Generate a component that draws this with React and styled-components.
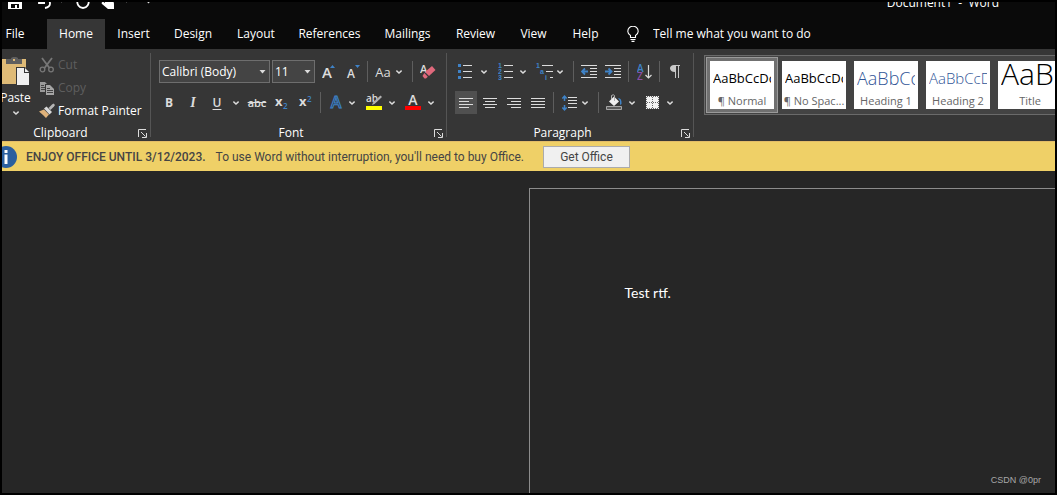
import React from "react";
import styled, { createGlobalStyle } from "styled-components";

const GlobalStyle = createGlobalStyle`
  * { box-sizing: border-box; }
  body {
    margin: 0;
    background: #000;
    color: #fff;
    font: 12px/16px "Open Sans", "Noto Sans", sans-serif;
  }
  button, select, input { font: inherit; color: inherit; }
  svg { display: block; flex: none; }
`;

/* ################################ LAYOUT ################################*/
const Window = styled.div`
  position: relative;
  display: flex;
  flex-direction: column;
  min-height: 100vh;
  border: 2px solid #000;
  overflow: hidden;
`;

const TitleBar = styled.header`
  display: flex;
  align-items: flex-end;
  justify-content: space-between;
  height: 17px;
  padding: 0 56px 8px 6px;
  background: #0a0a0a;
  overflow: hidden;
`;

const QuickAccess = styled.div`
  display: flex;
  align-items: flex-end;
  padding-bottom: 2px;
`;

const QuickButton = styled.button`
  display: flex;
  justify-content: center;
  align-items: flex-end;
  width: ${(p) => p.$w}px;
  margin-left: ${(p) => p.$gap || 0}px;
  padding: 0 0 ${(p) => p.$lift || 0}px;
  border: 0;
  background: none;
`;

const DocName = styled.div`
  white-space: pre;
`;

const TabBar = styled.nav`
  display: flex;
  height: 30px;
  background: #0a0a0a;
`;

const Tab = styled.button`
  width: ${(p) => p.$w}px;
  padding: 0 ${(p) => (p.$first ? 19 : 0)}px 0 0;
  border: 0;
  background: ${(p) => (p.$active ? "#363636" : "transparent")};
  text-align: center;
`;

const TellMe = styled.label`
  display: flex;
  flex: 1;
  align-items: center;
  gap: 14px;
  padding-left: 16px;
  input {
    flex: 1;
    padding: 0;
    border: 0;
    background: none;
    outline: none;
  }
  input::placeholder {
    color: #fff;
    opacity: 1;
  }
`;

const Ribbon = styled.div`
  display: flex;
  height: 92px;
  padding-top: 4px;
  background: #363636;
`;

const Group = styled.section`
  display: flex;
  flex: none;
  flex-direction: column;
  justify-content: space-between;
  width: ${(p) => p.$w}px;
  margin-left: ${(p) => (p.$cut ? -16 : 0)}px;
  background: linear-gradient(#555, #555) right top / 1px 84px no-repeat;
`;

const GroupFooter = styled.div`
  display: flex;
  align-items: center;
  height: 16px;
  padding-right: 1px;
  span {
    flex: 1;
    text-align: center;
  }
`;

const Launcher = styled.button`
  width: 15px;
  padding: 3px;
  border: 0;
  background: none;
`;

const ClipboardBody = styled.div`
  display: flex;
`;

const PasteButton = styled.button`
  display: flex;
  flex-direction: column;
  align-items: center;
  width: 51px;
  padding: 4px 0 0 8px;
  border: 0;
  background: none;
  span { margin: 4px 0 5px; }
`;

const ClipList = styled.div`
  display: flex;
  flex-direction: column;
`;

const ClipButton = styled.button`
  display: flex;
  align-items: center;
  gap: 3px;
  height: 23px;
  padding: 0 0 0 2px;
  border: 0;
  background: none;
  color: ${(p) => (p.disabled ? "#5e5e5e" : "#fff")};
  white-space: nowrap;
`;

const Rows = styled.div`
  display: flex;
  flex-direction: column;
  gap: 8px;
  padding: 7px 0 0 6px;
`;

const Row = styled.div`
  display: flex;
  align-items: center;
  height: 23px;
`;

const Tool = styled.button`
  display: flex;
  flex: none;
  align-items: center;
  justify-content: center;
  width: ${(p) => (p.$on ? 22 : 24)}px;
  height: 23px;
  margin-left: ${(p) => p.$gap || 0}px;
  padding: 0;
  border: 0;
  background: ${(p) => (p.$on ? "#505050" : "none")};
  color: #dcdcdc;
`;

const Drop = styled(Tool)`
  width: ${(p) => p.$w || 12}px;
`;

const Sep = styled.i`
  flex: none;
  width: 1px;
  height: 21px;
  margin: 0 3px 0 ${(p) => p.$gap || 3}px;
  background: #5e5e5e;
`;

const Combo = styled.div`
  position: relative;
  width: ${(p) => p.$w}px;
  height: 23px;
  margin: 0 0 0 2px;
  select {
    width: 100%;
    height: 100%;
    padding: 0 0 0 2px;
    appearance: none;
    border: 1px solid #6e6e6e;
    border-radius: 0;
    background: #444;
  }
  svg {
    position: absolute;
    top: 10px;
    right: 4px;
    pointer-events: none;
  }
`;

const Gallery = styled.div`
  display: flex;
  flex: 1;
  align-self: flex-start;
  min-width: 0;
  margin: 2px 0 0 10px;
  padding: 1px;
  border: 1px solid #6a6a6a;
  border-right: 0;
  background: #434343;
  overflow: hidden;
`;

const StyleItem = styled.button`
  flex: none;
  width: 72px;
  height: 56px;
  padding: 3px;
  border: 1px solid ${(p) => (p.$on ? "#9a9a9a" : "transparent")};
  background: ${(p) => (p.$on ? "#707070" : "none")};
`;

const StyleCard = styled.span`
  display: flex;
  flex-direction: column;
  justify-content: flex-end;
  height: 48px;
  background: #fff;
  color: #666;
  font-size: 11px;
  white-space: nowrap;
  overflow: hidden;
`;

const Sample = styled.span`
  height: 30px;
  margin: 0 3px;
  color: ${(p) => p.$color || "#000"};
  font-size: ${(p) => p.$size || 13}px;
  font-weight: ${(p) => p.$weight || 400};
  line-height: ${(p) => (p.$size > 20 ? 22 : 30)}px;
  text-align: left;
  overflow: hidden;
`;

const MessageBar = styled.div`
  display: flex;
  align-items: center;
  height: 30px;
  border-top: 1px solid #e3bd68;
  background: #efd067;
  color: #444;
  font-family: Roboto, "Open Sans", sans-serif;
  white-space: nowrap;
  svg { margin-left: -7px; }
  strong {
    margin: 0 10px 0 9px;
    font-weight: 500;
  }
`;

const OfficeButton = styled.button`
  width: 87px;
  height: 22px;
  margin-left: 19px;
  padding: 0;
  border: 1px solid #ababab;
  background: #f0f0f0;
`;

const Workspace = styled.main`
  display: flex;
  flex: 1;
  padding: 17px 0 0 50%;
  background: #262626;
`;

const Page = styled.article`
  flex: 1;
  padding: 94px 95px;
  border: solid #8c8c8c;
  border-width: 1px 0 0 1px;
  font: 14px/20px Lato, "Open Sans", sans-serif;
  p { margin: 0; }
`;

const Watermark = styled.div`
  position: absolute;
  right: 14px;
  bottom: 6px;
  color: #a8a8a8;
  font: 9px/14px "Liberation Sans", sans-serif;
`;

/* ################################ ICONS ################################*/
const Chevron = () => (
  <svg width="6" height="4" viewBox="0 0 6 4" fill="none" stroke="#dcdcdc" strokeWidth="1.4">
    <path d="M.4 .6 3 3 5.6 .6" />
  </svg>
);

const Triangle = () => (
  <svg width="7" height="4" viewBox="0 0 7 4">
    <path d="M.5 0h6L3.500 3.600z" fill="#dcdcdc" />
  </svg>
);

const LauncherIcon = () => (
  <svg width="9" height="9" viewBox="0 0 9 9" fill="none" stroke="#dcdcdc">
    <path d="M.5 8V.5H8M3 3l4.500 4.500M8.500 4v4.500H4" />
  </svg>
);

// lines: [x1, x2, y] triples
const Lines = ({ lines }) =>
  lines.map(([a, b, y]) => (
    <path key={a + "-" + y} d={`M${a} ${y + 0.5}H${b}`} stroke="#dcdcdc" />
  ));

const LineIcon = ({ w = 16, h = 16, lines, children }) => (
  <svg width={w} height={h} viewBox={`0 0 ${w} ${h}`} fill="none">
    <Lines lines={lines} />
    {children}
  </svg>
);

const SaveIcon = () => (
  <svg width="14" height="14" viewBox="0 0 14 14">
    <path d="M0 0h14v14H0z" fill="#fff" />
    <path d="M2 2h10v5H2zM3 9h8v4H9v-3H7v3H3z" fill="#0a0a0a" />
  </svg>
);

const UndoIcon = () => (
  <svg width="14" height="14" viewBox="0 0 14 14" fill="none" stroke="#fff" strokeWidth="1.8">
    <path d="M1 2v6h6M1.500 7.500C5 3 12 4 12 8.500c0 2.500-2 4-5 4.500" />
  </svg>
);

const RedoIcon = () => (
  <svg width="14" height="14" viewBox="0 0 14 14" fill="none" stroke="#fff" strokeWidth="1.8">
    <path d="M12.500 5c1 4-1.500 8-5.500 8S.5 9 1.500 5" />
  </svg>
);

const TouchIcon = () => (
  <svg width="14" height="16" viewBox="0 0 14 16" fill="#fff">
    <path d="M3 0h3v7l5 1c2 .5 2 2 2 4v4H7L1 11c-1-1 0-2.500 1.500-2L4 10z" />
  </svg>
);

const BulbIcon = () => (
  <svg width="12" height="16" viewBox="0 0 12 16" fill="none" stroke="#fff" strokeWidth="1.100">
    <path d="M3.500 11.500V9.500C2 8.200.8 7.200.8 5.400a5 5 0 0 1 10.400 0c0 1.800-1.200 2.800-2.700 4.100v2zM3.500 13.500h5M4.500 15.400h3" />
  </svg>
);

const PasteIcon = () => (
  <svg width="28" height="29" viewBox="0 0 28 29">
    <path d="M0 2h24v25H0z" fill="#dfbb77" />
    <path d="M4 2h5V1l2-1h3l2 1v1h4v5H4z" fill="#5f5f5f" />
    <path d="M11 2h2v2h-2z" fill="#dfbb77" />
    <path d="M14 10h9l5 5v14H14z" fill="#363636" />
    <path d="M15 11h7v5h5v12H15z" fill="#f0f0f0" />
    <path d="M23 11l4 4h-4z" fill="#f0f0f0" />
  </svg>
);

const CutIcon = () => (
  <svg width="16" height="16" viewBox="0 0 16 16" fill="none" stroke="#777" strokeWidth="1.800">
    <path d="M3 1l7.500 10M13 1L5.500 11" />
    <circle cx="3.500" cy="12.500" r="2.300" strokeWidth="1.300" />
    <circle cx="12" cy="12.500" r="2.300" strokeWidth="1.300" />
  </svg>
);

const CopyIcon = () => (
  <svg width="16" height="16" viewBox="0 0 16 16">
    <path d="M1 2h5l3 3v7H1z" fill="#9a9a9a" />
    <path d="M2 5.500h3M2 7.500h4M2 9.500h4" stroke="#444" />
    <path d="M6 4h5.500L16 8v7H6z" fill="#363636" />
    <path d="M7 5h4l4 4v6H7z" fill="#a5a5a5" />
    <path d="M8 8.500h3M8 10.500h6M8 12.500h6" stroke="#444" />
  </svg>
);

const BrushIcon = () => (
  <svg width="16" height="16" viewBox="0 0 16 16">
    <path d="M0 8.500l5-2 5 5L7 15 4 12z" fill="#dfb27a" />
    <path d="M5 5.500l2.500-2 5.500 5.500-2.500 2.500z" fill="#d8d8d8" />
    <path d="M9.500 5L13 1.500l1.500-1L16 2l-1 1.500L11.500 7z" fill="#b5b5b5" />
  </svg>
);

const GlyphIcon = styled.svg`
  font-family: "Open Sans", sans-serif;
  font-weight: 600;
  fill: #dcdcdc;
`;

const DigitIcon = styled(GlyphIcon)`
  font-family: "Liberation Sans", sans-serif;
  font-size: 7px;
  font-weight: 700;
`;

const InfoIcon = () => (
  <svg width="22" height="22" viewBox="0 0 22 22">
    <circle cx="11" cy="11" r="11" fill="#2b5f9e" />
    <path d="M9.500 4h3v3h-3zM9.500 8.500h3V18h-3z" fill="#fff" />
  </svg>
);

const EraserIcon = () => (
  <GlyphIcon width="16" height="17" viewBox="0 0 16 17">
    <text x="0" y="10" fontSize="11">A</text>
    <path d="M12 3l3.500 4L9 13 5 9z" fill="#e0697c" />
    <path d="M4.300 10l3.500 3.700L6 15.500H4.500L2.500 13z" fill="#e0697c" />
  </GlyphIcon>
);

const HighlightIcon = () => (
  <GlyphIcon width="16" height="17" viewBox="0 0 16 17">
    <text x="0" y="8" fontSize="10">ab</text>
    <path d="M14.500 1.500L16 3 8.500 10 6 11l1-2.500z" fill="#b0b0b0" />
    <path d="M0 12h16v4H0z" fill="#ff0" />
  </GlyphIcon>
);

const ShadingIcon = () => (
  <svg width="16" height="17" viewBox="0 0 16 17">
    <path d="M8 2.500l5 5L8 12 3 7.500z" fill="#f0f0f0" />
    <path d="M5.500 5V1.500q2-1.500 3 0V7" fill="none" stroke="#b0b0b0" />
    <path d="M12 4q4 0 3.500 6l-1.500 1V7z" fill="#3f83c8" />
    <path d="M.5 12.500h15v3H.5z" fill="#5a5a5a" stroke="#a6a6a6" />
  </svg>
);

const BordersIcon = () => (
  <svg width="13" height="13" viewBox="0 0 13 13" fill="none">
    <path d="M0 0h13v13H0z" fill="#f2f2f2" />
    <path d="M1 .5h12M1 6.500h12M1 12.500h12M.5 1v12M6.500 1v12M12.500 1v12" stroke="#666" strokeDasharray="1 1" />
  </svg>
);

const blue = "#3f83c8";

const IndentIcon = ({ out }) => (
  <LineIcon w={16} h={13} lines={[[0, 16, 0], [9, 16, 3], [9, 16, 6], [9, 16, 9], [0, 16, 12]]}>
    <path
      d={out ? "M7 6.500H1M4 3.500L1 6.500l3 3" : "M0 6.500h6M3.500 3.500l3 3-3 3"}
      stroke={blue}
      strokeWidth="1.800"
    />
  </LineIcon>
);

const NumIcon = () => (
  <DigitIcon width="15" height="17" viewBox="0 0 15 17">
    <Lines lines={[[6, 15, 2], [6, 15, 8], [6, 15, 14]]} />
    <text x="0" y="5" fill={blue}>1</text>
    <text x="0" y="11" fill={blue}>2</text>
    <text x="0" y="17" fill={blue}>3</text>
  </DigitIcon>
);

const MultiIcon = () => (
  <DigitIcon width="17" height="17" viewBox="0 0 17 17">
    <Lines lines={[[6, 17, 2], [10, 17, 8], [14, 17, 14]]} />
    <text x="0" y="5" fill={blue}>1</text>
    <text x="4" y="11" fill={blue}>a</text>
    <text x="9" y="17" fill={blue}>i</text>
  </DigitIcon>
);

const SortIcon = () => (
  <GlyphIcon width="15" height="16" viewBox="0 0 15 16" fontSize="10">
    <text x="0" y="8" fill={blue}>A</text>
    <text x="0" y="16" fill="#8a4fa8">Z</text>
    <path d="M11.500 1v13M8.500 11l3 3 3-3" fill="none" stroke="#dcdcdc" strokeWidth="1.200" />
  </GlyphIcon>
);

const SpacingIcon = () => (
  <LineIcon w={15} h={16} lines={[[6, 15, 2], [6, 15, 5], [6, 15, 8], [6, 15, 12]]}>
    <path d="M2.500 1v5M2.500 10v5M.3 3.500l2.200-2.300 2.200 2.300M.3 12.500l2.200 2.300 2.200-2.300" stroke={blue} strokeWidth="1.500" />
  </LineIcon>
);

const SizeIcon = ({ up }) => (
  <GlyphIcon width="14" height="16" viewBox="0 0 14 16">
    <text x={up ? 0 : 1} y="14" fontSize={up ? 15 : 12}>A</text>
    <path d={up ? "M8 4h5l-2.500-3z" : "M9 1h5l-2.500 3z"} fill={blue} />
  </GlyphIcon>
);

const ScriptIcon = ({ sup }) => (
  <GlyphIcon width="14" height="16" viewBox="0 0 14 16">
    <text x="1" y="11" fontSize="13" fontWeight="700">x</text>
    <text x="9" y={sup ? 7 : 14} fontSize="8" fill={blue}>2</text>
  </GlyphIcon>
);

const FontColorIcon = () => (
  <GlyphIcon width="16" height="17" viewBox="0 0 16 17">
    <text x="8" y="11" fontSize="14" textAnchor="middle">A</text>
    <path d="M0 12h16v4H0z" fill="#f00" />
  </GlyphIcon>
);

const EffectsIcon = () => (
  <GlyphIcon width="16" height="17" viewBox="0 0 16 17">
    <text x="8" y="14" fontSize="16" textAnchor="middle" fill="#2b3a4a" stroke={blue}>A</text>
  </GlyphIcon>
);

const PilcrowIcon = () => (
  <svg width="10" height="13" viewBox="0 0 10 13">
    <path d="M10 0v1H9v12H8V1H6v12H5V7C-1.500 7-1.500 0 4 0z" fill="#c8c8c8" />
  </svg>
);

/* ################################ CONTENT ################################*/
const tabs = [
  ["File", 45],
  ["Home", 58],
  ["Insert", 57],
  ["Design", 62],
  ["Layout", 64],
  ["References", 83],
  ["Mailings", 73],
  ["Review", 63],
  ["View", 53],
  ["Help", 51],
];

const styles = [
  { name: "¶ Normal" },
  { name: "¶ No Spac..." },
  { name: "Heading 1", size: 18, weight: 300, color: "#2f5496" },
  { name: "Heading 2", size: 15, weight: 300, color: "#2f5496" },
  { name: "Title", size: 30, weight: 300 },
];

const bulletLines = [[5, 14, 2], [5, 14, 8], [5, 14, 14]];
const alignments = [
  ["Align left", [[0, 14, 0], [0, 10, 3], [0, 14, 6], [0, 10, 9]]],
  ["Center", [[0, 14, 0], [2, 12, 3], [0, 14, 6], [2, 12, 9]]],
  ["Align right", [[0, 14, 0], [4, 14, 3], [0, 14, 6], [4, 14, 9]]],
  ["Justify", [[0, 14, 0], [0, 14, 3], [0, 14, 6], [0, 14, 9]]],
];

const Footer = ({ children }) => (
  <GroupFooter>
    <span>{children}</span>
    <Launcher aria-label={children + " settings"}>
      <LauncherIcon />
    </Launcher>
  </GroupFooter>
);

const More = ({ w, label }) => (
  <Drop $w={w} aria-label={label + " options"}>
    <Chevron />
  </Drop>
);

const ClipboardGroup = () => (
  <Group $w={165} $cut>
    <ClipboardBody>
      <PasteButton>
        <PasteIcon />
        <span>Paste</span>
        <Chevron />
      </PasteButton>
      <ClipList>
        <ClipButton disabled><CutIcon />Cut</ClipButton>
        <ClipButton disabled><CopyIcon />Copy</ClipButton>
        <ClipButton><BrushIcon />Format Painter</ClipButton>
      </ClipList>
    </ClipboardBody>
    <Footer>Clipboard</Footer>
  </Group>
);

const Bold = styled.b`font-weight: 700;`;
const Italic = styled.em`font-family: "Liberation Serif", serif; font-size: 14px; font-weight: 700;`;
const Under = styled.u`font-weight: 600; text-underline-offset: 2px;`;
const Strike = styled.s`font-size: 11px; font-weight: 600;`;
const CaseLabel = styled.span`font-size: 13px;`;

const FontGroup = () => (
  <Group $w={296}>
    <Rows>
      <Row>
        <Combo $w={111}>
          <select aria-label="Font"><option>Calibri (Body)</option></select>
          <Triangle />
        </Combo>
        <Combo $w={43}>
          <select aria-label="Font size"><option>11</option></select>
          <Triangle />
        </Combo>
        <Tool $gap={2} aria-label="Grow font"><SizeIcon up /></Tool>
        <Tool aria-label="Shrink font"><SizeIcon /></Tool>
        <Sep $gap={2} />
        <Tool aria-label="Change case"><CaseLabel>Aa</CaseLabel></Tool>
        <More w={8} label="Case" />
        <Sep $gap={9} />
        <Tool aria-label="Clear formatting"><EraserIcon /></Tool>
      </Row>
      <Row>
        <Tool><Bold>B</Bold></Tool>
        <Tool><Italic>I</Italic></Tool>
        <Tool><Under>U</Under></Tool>
        <More w={14} label="Underline" />
        <Tool $gap={2}><Strike>abc</Strike></Tool>
        <Tool aria-label="Subscript"><ScriptIcon /></Tool>
        <Tool aria-label="Superscript"><ScriptIcon sup /></Tool>
        <Sep />
        <Tool aria-label="Text effects"><EffectsIcon /></Tool>
        <More w={8} label="Effects" />
        <Tool $gap={6} aria-label="Highlight"><HighlightIcon /></Tool>
        <More label="Highlight" />
        <Tool $gap={3} aria-label="Font color"><FontColorIcon /></Tool>
        <More label="Font color" />
      </Row>
    </Rows>
    <Footer>Font</Footer>
  </Group>
);

const ParagraphGroup = () => (
  <Group $w={247}>
    <Rows>
      <Row>
        <Tool aria-label="Bullets">
          <LineIcon w={14} h={17} lines={bulletLines}>
            <path d="M0 1h3v3H0zM0 7h3v3H0zM0 13h3v3H0z" fill={blue} />
          </LineIcon>
        </Tool>
        <More w={14} label="Bullets" />
        <Tool $gap={2} aria-label="Numbering"><NumIcon /></Tool>
        <More label="Numbering" />
        <Tool $gap={3} aria-label="Multilevel list"><MultiIcon /></Tool>
        <More w={8} label="Multilevel list" />
        <Sep $gap={9} />
        <Tool aria-label="Decrease indent"><IndentIcon out /></Tool>
        <Tool aria-label="Increase indent"><IndentIcon /></Tool>
        <Sep />
        <Tool aria-label="Sort"><SortIcon /></Tool>
        <Sep />
        <Tool aria-label="Show marks"><PilcrowIcon /></Tool>
      </Row>
      <Row>
        {alignments.map(([label, lines], i) => (
          <Tool key={label} aria-label={label} $on={i === 0} $gap={i === 0 ? 2 : i === 1 ? 1 : 0}>
            <LineIcon w={14} h={10} lines={lines} />
          </Tool>
        ))}
        <Sep />
        <Tool aria-label="Line spacing"><SpacingIcon /></Tool>
        <More w={8} label="Line spacing" />
        <Sep $gap={9} />
        <Tool aria-label="Shading"><ShadingIcon /></Tool>
        <More label="Shading" />
        <Tool $gap={2} aria-label="Borders"><BordersIcon /></Tool>
        <More label="Borders" />
      </Row>
    </Rows>
    <Footer>Paragraph</Footer>
  </Group>
);

export default function App() {
  return (
    <>
      <GlobalStyle />
      <Window>
        <TitleBar>
          <QuickAccess>
            <QuickButton $w={14} aria-label="Save"><SaveIcon /></QuickButton>
            <QuickButton $w={22} $gap={12} aria-label="Undo"><UndoIcon /></QuickButton>
            <QuickButton $w={10} $lift={6} aria-label="Undo options"><Triangle /></QuickButton>
            <QuickButton $w={30} $gap={2} aria-label="Redo"><RedoIcon /></QuickButton>
            <QuickButton $w={20} aria-label="Touch mode"><TouchIcon /></QuickButton>
            <QuickButton $w={10} $gap={3} $lift={6} aria-label="Touch options"><Triangle /></QuickButton>
            <QuickButton $w={20} $gap={7} $lift={5} aria-label="Customize"><Triangle /></QuickButton>
          </QuickAccess>
          <DocName>{"Document1  -  Word"}</DocName>
        </TitleBar>
        <TabBar>
          {tabs.map(([name, w]) => (
            <Tab key={name} $w={w} $first={name === "File"} $active={name === "Home"}>
              {name}
            </Tab>
          ))}
          <TellMe>
            <BulbIcon />
            <input aria-label="Tell me" placeholder="Tell me what you want to do" />
          </TellMe>
        </TabBar>
        <Ribbon>
          <ClipboardGroup />
          <FontGroup />
          <ParagraphGroup />
          <Gallery>
            {styles.map((s, i) => (
              <StyleItem key={s.name} $on={i === 0}>
                <StyleCard>
                  <Sample $size={s.size} $weight={s.weight} $color={s.color}>AaBbCcDc</Sample>
                  <span>{s.name}</span>
                </StyleCard>
              </StyleItem>
            ))}
          </Gallery>
        </Ribbon>
        <MessageBar>
          <InfoIcon />
          <strong>ENJOY OFFICE UNTIL 3/12/2023.</strong>
          <span>To use Word without interruption, you'll need to buy Office.</span>
          <OfficeButton>Get Office</OfficeButton>
        </MessageBar>
        <Workspace>
          <Page>
            <p>Test rtf.</p>
          </Page>
        </Workspace>
        <Watermark>CSDN @0pr</Watermark>
      </Window>
    </>
  );
}
